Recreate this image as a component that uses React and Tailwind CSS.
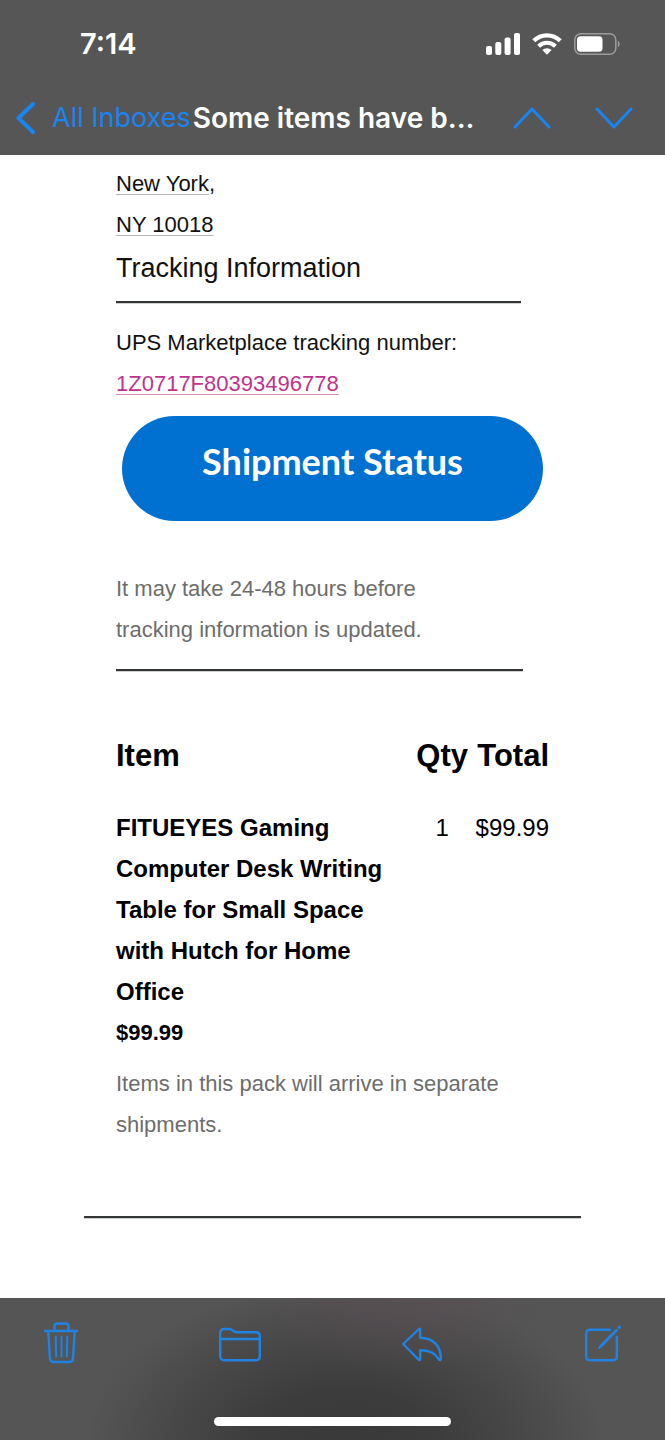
const items = [
    {
        name: 'FITUEYES Gaming Computer Desk Writing Table for Small Space with Hutch for Home Office',
        price: '$99.99',
        qty: 1,
        total: '$99.99',
    },
];

function StatusBar() {
    return (
        <div className="flex h-[88px] items-center justify-between pl-20 pr-[45px]">
            <span className="text-[29px] font-semibold leading-8">7:14</span>
            <div className="flex items-center">
                <svg className="mr-3" width="34" height="22" viewBox="0 0 34 22" fill="white" aria-hidden="true">
                    <rect x="0" y="13" width="6" height="9" rx="2" />
                    <rect x="9.3" y="9" width="6" height="13" rx="2" />
                    <rect x="18.6" y="4.5" width="6" height="17.5" rx="2" />
                    <rect x="28" y="0" width="6" height="22" rx="2" />
                </svg>
                <svg className="mr-3" width="30" height="22" viewBox="0 0 30 22" aria-hidden="true">
                    <path d="M1.8 7.8a18.8 18.8 0 0 1 26.4 0" fill="none" stroke="white" strokeWidth="4.4" />
                    <path d="M6.6 13.2a12 12 0 0 1 16.8 0" fill="none" stroke="white" strokeWidth="4" />
                    <path d="M10.4 17.1a6.6 6.6 0 0 1 9.2 0L15 21.8z" fill="white" />
                </svg>
                <svg width="46" height="22" viewBox="0 0 46 22" aria-hidden="true">
                    <rect x="0.8" y="0.8" width="41" height="20.4" rx="6" fill="none" stroke="#9b9b9b" strokeWidth="1.5" />
                    <rect x="3" y="3.2" width="25.5" height="15.6" rx="3.6" fill="white" />
                    <path d="M43.8 7.6a4 4 0 0 1 0 6.8z" fill="#9b9b9b" />
                </svg>
            </div>
        </div>
    );
}

function NavBar() {
    return (
        <nav className="flex h-[67px] items-center justify-between pb-[7px] pl-4 pr-8">
            <div className="flex items-center whitespace-nowrap">
                <a href="#inboxes" className="flex items-center gap-4 text-[27px] leading-8 text-[#1a84f0]">
                    <svg width="20" height="34" viewBox="0 0 20 34" fill="none" stroke="currentColor" strokeWidth="4" strokeLinecap="round" strokeLinejoin="round" aria-hidden="true">
                        <path d="M17 3L2.5 17L17 31" />
                    </svg>
                    All Inboxes
                </a>
                <h1 className="ml-0.5 text-[28px] font-semibold leading-8">Some items have b...</h1>
            </div>
            <div className="flex items-center gap-11 text-[#1a84f0]">
                <button type="button" aria-label="Previous message">
                    <svg width="38" height="24" viewBox="0 0 38 24" fill="none" stroke="currentColor" strokeWidth="3" strokeLinecap="round" strokeLinejoin="round">
                        <path d="M2 21L19 3L36 21" />
                    </svg>
                </button>
                <button type="button" aria-label="Next message">
                    <svg width="38" height="24" viewBox="0 0 38 24" fill="none" stroke="currentColor" strokeWidth="3" strokeLinecap="round" strokeLinejoin="round">
                        <path d="M2 3L19 21L36 3" />
                    </svg>
                </button>
            </div>
        </nav>
    );
}

function Divider({ className = '' }) {
    return <hr className={`h-[3px] border-0 border-t-2 border-[#333636] bg-[#cfcfcf] ${className}`} />;
}

function Toolbar() {
    return (
        <footer className="bg-[#555555] bg-[radial-gradient(ellipse_150px_70px_at_60%_5%,#5a4e5499_0%,#5a4e5400_100%),radial-gradient(ellipse_260px_165px_at_52%_105%,#393939_0%,#3c3c3c_35%,#484848_68%,#55555500_100%)] pb-[14px] pt-[22px]">
            <div className="flex justify-between px-11 text-[#1f83e4]">
                <button type="button" aria-label="Delete">
                    <svg width="34" height="44" viewBox="0 0 34 44" fill="none" stroke="currentColor" strokeWidth="2.4" strokeLinecap="round" strokeLinejoin="round">
                        <path d="M1 11H33.5" />
                        <path d="M10.5 11V6.5Q10.5 3.5 13.5 3.5H21.5Q24.5 3.5 24.5 6.5V11" />
                        <path d="M4.2 11L6 38.5Q6.2 42 9.5 42H25.5Q28.8 42 29 38.5L30.8 11" />
                        <path d="M11.7 16.5L12.2 36.5M17.5 16.5V36.5M23.3 16.5L22.8 36.5" strokeWidth="2" />
                    </svg>
                </button>
                <button type="button" aria-label="Move to folder">
                    <svg width="42" height="44" viewBox="0 0 42 44" fill="none" stroke="currentColor" strokeWidth="2.4" strokeLinecap="round" strokeLinejoin="round">
                        <path d="M1.2 36.2V13Q1.2 9 5.2 9H10Q12 9 13.5 10.4Q15.5 12.2 17.5 12.2H36.8Q40.8 12.2 40.8 16.2V36.2Q40.8 40.2 36.8 40.2H5.2Q1.2 40.2 1.2 36.2Z" />
                        <path d="M1.2 19H40.8" />
                    </svg>
                </button>
                <button type="button" aria-label="Reply">
                    <svg width="42" height="44" viewBox="0 0 42 44" fill="none" stroke="currentColor" strokeWidth="2.4" strokeLinecap="round" strokeLinejoin="round">
                        <path d="M1.2 24L17 9Q18.2 8 18.2 9.8V17.8C31 18 38.8 25.5 38.8 38.5Q38.6 41.4 36.8 39.2C33.5 33 28 30.2 18.2 30.2V38.6Q18.2 41 16.6 39.6Z" />
                    </svg>
                </button>
                <button type="button" aria-label="Compose">
                    <svg width="36" height="44" viewBox="0 0 36 44" fill="none" stroke="currentColor" strokeWidth="2.4" strokeLinecap="round" strokeLinejoin="round">
                        <path d="M25 9.8H5.2Q1.2 9.8 1.2 13.8V36.2Q1.2 40.2 5.2 40.2H27.8Q31.8 40.2 31.8 36.2V17" />
                        <path d="M15.5 26.5L31.5 10.3" strokeWidth="3" />
                        <path d="M13.8 28.4L15.8 26.4" strokeWidth="1.8" />
                        <path d="M34.1 7.4L34.5 7" strokeWidth="3" />
                    </svg>
                </button>
            </div>
            <div className="mx-auto mt-[53px] h-[9px] w-[237px] rounded-full bg-white" />
        </footer>
    );
}

export default function App() {
    return (
        <div className="bg-white font-['Liberation_Sans',Arial,sans-serif] text-[22px] leading-[41px] text-[#111111]">
            <header className="bg-[#565656] font-[Inter,sans-serif] text-white">
                <StatusBar />
                <NavBar />
            </header>

            <main className="px-[84px] pb-[79px] pt-2">
                <div className="px-8">
                    <address className="not-italic">
                        <span className="underline decoration-[#b5b5b5] decoration-1 underline-offset-[3px]">New York</span>,
                        <br />
                        <span className="underline decoration-[#b5b5b5] decoration-1 underline-offset-[3px]">NY 10018</span>
                    </address>

                    <h2 className="text-[27px] leading-[46px]">Tracking Information</h2>
                    <Divider className="mb-[18px] mr-7 mt-2.5" />

                    <p>UPS Marketplace tracking number:</p>
                    <a href="#tracking" className="block text-[#c0328c] underline decoration-[#d98abf] decoration-1 underline-offset-[3px]">
                        1Z0717F80393496778
                    </a>

                    <a
                        href="#status"
                        className="ml-1.5 mr-1.5 mt-3 flex h-[105px] items-center justify-center rounded-full bg-[#0071d0] pb-3.5 font-[Lato,sans-serif] text-[36px] font-bold text-white"
                    >
                        Shipment Status
                    </a>

                    <p className="mt-[47px] max-w-[340px] text-[#6d6d6d]">
                        It may take 24-48 hours before tracking information is updated.
                    </p>
                    <Divider className="mr-[26px] mt-[19px]" />

                    <table className="mt-[52px] w-full text-black">
                        <thead>
                            <tr className="text-[31px] leading-[64px]">
                                <th className="text-left font-bold">Item</th>
                                <th className="w-[50px] text-center font-bold">Qty</th>
                                <th className="w-[81px] text-right font-bold">Total</th>
                            </tr>
                        </thead>
                        <tbody>
                            {items.map((item) => (
                                <tr key={item.name} className="align-top text-[24px]">
                                    <td className="pr-6 pt-[19px] font-bold">
                                        {item.name}
                                        <div className="text-[22px]">{item.price}</div>
                                    </td>
                                    <td className="pt-[19px] text-center">{item.qty}</td>
                                    <td className="pt-[19px] text-right">{item.total}</td>
                                </tr>
                            ))}
                        </tbody>
                    </table>

                    <p className="mt-2.5 text-[#6d6d6d]">
                        Items in this pack will arrive in separate shipments.
                    </p>
                </div>

                <Divider className="mt-[71px]" />
            </main>

            <Toolbar />
        </div>
    );
}
